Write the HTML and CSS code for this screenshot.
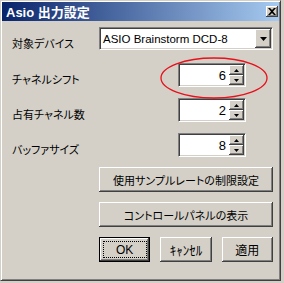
FILE: index.html
```html
<!DOCTYPE html>
<html lang="ja">
<head>
  <meta charset="UTF-8">
  <title>Asio 出力設定</title>
  <link rel="stylesheet" href="styles.css">
</head>
<body>
  <div class="window">
    <div class="titlebar">
      <span class="title">Asio 出力設定</span>
      <span class="close">
        <svg width="8" height="7" viewBox="0 0 8 7"><path d="M0 0h2l2 2 2-2h2L5 3.5 8 7H6L4 5 2 7H0l3-3.5z" fill="#000"/></svg>
      </span>
    </div>

    <div class="content">
      <div class="row row-device">
        <label class="label">対象デバイス</label>
        <div class="field combo">
          <span class="combo-text">ASIO Brainstorm DCD-8</span>
          <span class="raised combo-btn">
            <svg width="7" height="4" viewBox="0 0 7 4"><path d="M0 0h7L3.5 4z" fill="#000"/></svg>
          </span>
        </div>
      </div>

      <div class="row row-shift">
        <label class="label">チャネルシフト</label>
        <div class="field spin">
          <span class="spin-value">6</span>
          <span class="spin-btns">
            <span class="raised spin-btn"><svg width="5" height="3" viewBox="0 0 5 3"><path d="M2.5 0L5 3H0z" fill="#000"/></svg></span>
            <span class="raised spin-btn"><svg width="5" height="3" viewBox="0 0 5 3"><path d="M0 0h5L2.5 3z" fill="#000"/></svg></span>
          </span>
        </div>
      </div>

      <div class="row row-count">
        <label class="label">占有チャネル数</label>
        <div class="field spin">
          <span class="spin-value">2</span>
          <span class="spin-btns">
            <span class="raised spin-btn"><svg width="5" height="3" viewBox="0 0 5 3"><path d="M2.5 0L5 3H0z" fill="#000"/></svg></span>
            <span class="raised spin-btn"><svg width="5" height="3" viewBox="0 0 5 3"><path d="M0 0h5L2.5 3z" fill="#000"/></svg></span>
          </span>
        </div>
      </div>

      <div class="row row-buffer">
        <label class="label">バッファサイズ</label>
        <div class="field spin">
          <span class="spin-value">8</span>
          <span class="spin-btns">
            <span class="raised spin-btn"><svg width="5" height="3" viewBox="0 0 5 3"><path d="M2.5 0L5 3H0z" fill="#000"/></svg></span>
            <span class="raised spin-btn"><svg width="5" height="3" viewBox="0 0 5 3"><path d="M0 0h5L2.5 3z" fill="#000"/></svg></span>
          </span>
        </div>
      </div>

      <div class="actions">
        <button class="raised btn wide">使用サンプルレートの制限設定</button>
        <button class="raised btn wide">コントロールパネルの表示</button>
        <div class="btn-row">
          <button class="raised btn default"><span class="focus">OK</span></button>
          <button class="raised btn cancel">ｷｬﾝｾﾙ</button>
          <button class="raised btn">適用</button>
        </div>
      </div>
    </div>

    <svg class="highlight" width="108" height="42" viewBox="0 0 108 42">
      <ellipse cx="54" cy="21" rx="53" ry="20" fill="none" stroke="#e8101a" stroke-width="1.3"/>
    </svg>
  </div>
</body>
</html>
```

FILE: styles.css
```css
body {
  margin: 0;
  background: #d4d0c8;
  font-family: "Liberation Sans", "Noto Sans CJK JP", sans-serif;
  font-size: 11px;
  color: #000;
  font-feature-settings: "palt";
}

.window {
  position: relative;
  width: 281px;
  height: 281px;
  box-sizing: border-box;
  border: 1px solid;
  border-color: #d4d0c8 #404040 #404040 #d4d0c8;
  box-shadow: inset 1px 1px #fff, inset -1px -1px #808080;
  padding: 1px;
}

.titlebar {
  height: 19px;
  display: flex;
  align-items: center;
  justify-content: space-between;
  padding: 0 1px 0 4px;
  background: linear-gradient(to right, #0a246a, #a6caf0);
}

.title {
  color: #fff;
  font-weight: bold;
  font-size: 13px;
}

.close {
  width: 12px;
  height: 11px;
  display: flex;
  align-items: center;
  justify-content: center;
  background: #d4d0c8;
  box-shadow: inset -1px -1px #404040, inset 1px 1px #fff, inset -2px -2px #808080;
}

.content {
  padding: 6px 0 0 10px;
}

.row {
  display: flex;
  align-items: flex-start;
}

.label {
  width: 87px;
  flex: none;
  line-height: 12px;
  padding-top: 11px;
}

.row-shift {
  margin-top: 13px;
}

.row-count,
.row-buffer {
  margin-top: 11px;
}

.field {
  background: #fff;
  box-sizing: border-box;
  border: 1px solid;
  border-color: #808080 #fff #fff #808080;
  box-shadow: inset 1px 1px #404040, inset -1px -1px #d4d0c8;
  padding: 1px;
  display: flex;
  align-items: center;
}

.raised {
  background: #d4d0c8;
  box-shadow: inset -1px -1px #404040, inset 1px 1px #fff, inset -2px -2px #808080;
}

.combo {
  width: 174px;
  height: 23px;
}

.combo-text {
  padding-left: 2px;
  font-size: 11.5px;
}

.combo-btn {
  margin-left: auto;
  width: 16px;
  height: 19px;
  display: flex;
  align-items: center;
  justify-content: center;
}

.spin {
  margin-left: 79px;
  width: 68px;
  height: 24px;
}

.spin-value {
  flex: 1;
  text-align: right;
  padding-right: 3px;
  font-size: 13px;
}

.spin-btns {
  display: flex;
  flex-direction: column;
  height: 20px;
}

.spin-btn {
  width: 15px;
  height: 10px;
  display: flex;
  align-items: center;
  justify-content: center;
}

.actions {
  margin: 10px 0 0 87px;
  display: flex;
  flex-direction: column;
  gap: 10px;
  width: 174px;
}

.btn {
  border: none;
  padding: 0;
  font: inherit;
  font-feature-settings: "palt";
  color: #000;
  height: 25px;
}

.btn-row {
  display: flex;
  gap: 10px;
}

.btn-row .btn {
  width: 52px;
  font-size: 12px;
}

.btn-row .cancel {
  font-size: 13px;
}

.default {
  border: 1px solid #000;
  display: flex;
  align-items: center;
  justify-content: center;
}

.focus {
  display: flex;
  align-items: center;
  justify-content: center;
  width: 42px;
  height: 15px;
  outline: 1px dotted #000;
}

.highlight {
  position: absolute;
  left: 159px;
  top: 56px;
}
```
